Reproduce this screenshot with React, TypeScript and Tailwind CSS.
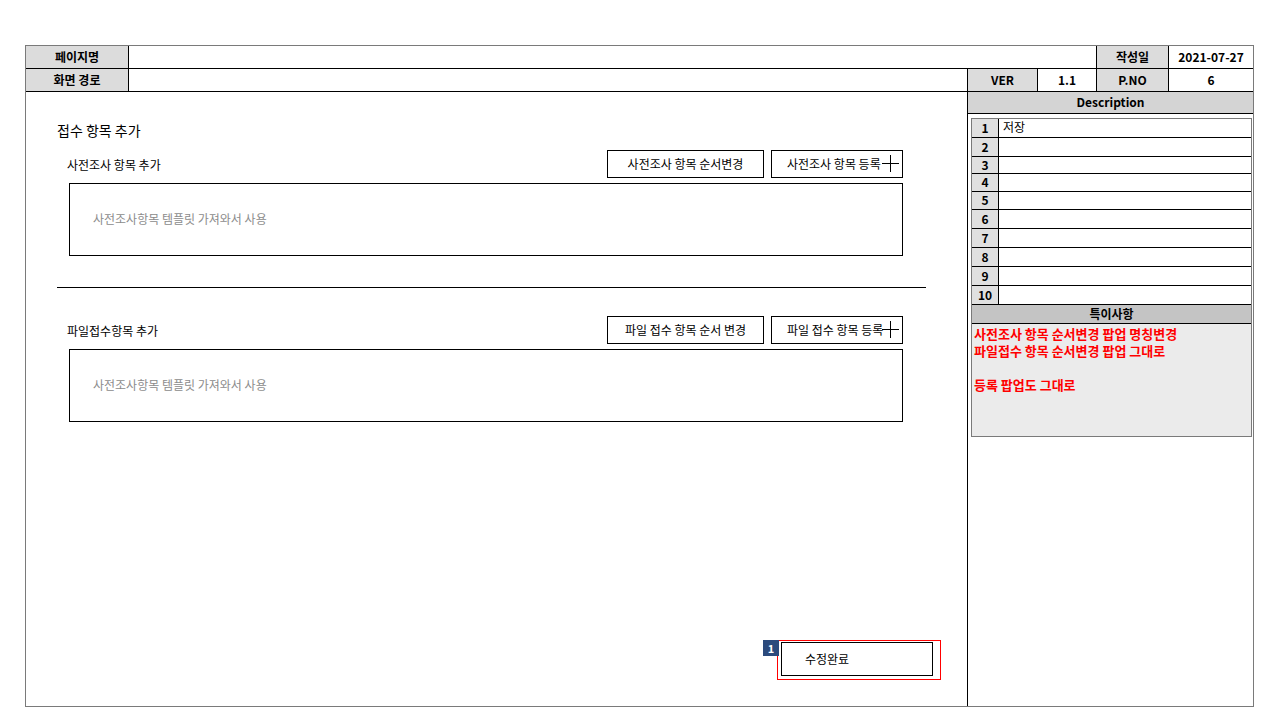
import React from "react";

const font = { fontFamily: '"Noto Sans CJK KR", "Noto Sans", sans-serif' };

function Btn({ w, children, plus }: { w: string; children: React.ReactNode; plus?: boolean }) {
  return (
    <div className={`${w} h-[28px] border border-black flex items-center ${plus ? "justify-start pl-[15px]" : "justify-center"} text-[12px] text-black bg-white relative whitespace-nowrap`}>
      <span className="pb-[1px]">{children}</span>
      {plus && (
        <svg width="19" height="19" viewBox="0 0 19 19" className="absolute right-[2px] top-[3px]">
          <path d="M9.5 1 V18 M1 9.5 H18" stroke="black" strokeWidth="1" />
        </svg>
      )}
    </div>
  );
}

function Section({ label, b1, b2 }: { label: string; b1: string; b2: string }) {
  return (
    <div className="ml-[43px] w-[834px]">
      <div className="h-[28px] flex items-center justify-between">
        <span className="ml-[-2px] text-[12px] text-black pt-[1px]">{label}</span>
        <div className="flex gap-[7px]">
          <Btn w="w-[157px]">{b1}</Btn>
          <Btn w="w-[132px]" plus>{b2}</Btn>
        </div>
      </div>
      <div className="mt-[5px] h-[73px] border border-black flex items-center pl-[23px] pb-[2px] text-[12px] text-[#8c8c8c]">
        사전조사항목 템플릿 가져와서 사용
      </div>
    </div>
  );
}

const rowHeights = [19, 19, 17, 18, 18, 19, 19, 19, 19, 19];

export default function App() {
  return (
    <div className="w-[1280px] h-[720px] bg-white pt-[45px] pl-[25px]" style={font}>
      <div className="w-[1229px] h-[662px] border border-[#7a7a7a] flex flex-col text-black">
        {/* header row 1 */}
        <div className="h-[23px] flex border-b border-black text-[12px] leading-[16px]">
          <div className="w-[103px] bg-[#dcdcdc] border-r border-black flex items-center justify-center font-bold pb-[1px]">페이지명</div>
          <div className="flex-1 border-r border-black" />
          <div className="w-[72px] bg-[#dcdcdc] border-r border-black flex items-center justify-center font-bold pb-[1px]">작성일</div>
          <div className="w-[84px] flex items-center justify-center font-bold pb-[1px]">2021-07-27</div>
        </div>
        {/* header row 2 */}
        <div className="h-[23px] flex border-b border-black text-[12px] leading-[16px]">
          <div className="w-[103px] bg-[#dcdcdc] border-r border-black flex items-center justify-center font-bold pb-[1px]">화면 경로</div>
          <div className="flex-1 border-r border-black" />
          <div className="w-[70px] bg-[#dcdcdc] border-r border-black flex items-center justify-center font-bold pb-[1px]">VER</div>
          <div className="w-[59px] border-r border-black flex items-center justify-center font-bold pb-[1px]">1.1</div>
          <div className="w-[72px] bg-[#dcdcdc] border-r border-black flex items-center justify-center font-bold pb-[1px]">P.NO</div>
          <div className="w-[84px] flex items-center justify-center font-bold pb-[1px]">6</div>
        </div>
        {/* body */}
        <div className="flex-1 flex">
          <div className="flex-1 border-r border-black flex flex-col">
            <div className="mt-[28px] ml-[31px] text-[14px] leading-[20px]">접수 항목 추가</div>
            <div className="mt-[10px]">
              <Section label="사전조사 항목 추가" b1="사전조사 항목 순서변경" b2="사전조사 항목 등록" />
            </div>
            <div className="mt-[31px] ml-[31px] w-[869px] h-px bg-black" />
            <div className="mt-[28px]">
              <Section label="파일접수항목 추가" b1="파일 접수 항목 순서 변경" b2="파일 접수 항목 등록" />
            </div>
            <div className="mt-auto mb-[26px] flex justify-end pr-[26px]">
              <div className="relative w-[164px] h-[40px] border border-[#ff0000] pl-[3px] pt-[1px]">
                <div className="absolute left-[-15px] top-[-1px] w-[16px] h-[16px] bg-[#2b4a7c] text-white text-[11px] font-bold flex items-center justify-center">1</div>
                <div className="w-[152px] h-[34px] border border-black flex items-center pl-[23px] pb-[1px] text-[12px]">수정완료</div>
              </div>
            </div>
          </div>
          {/* right panel */}
          <div className="w-[285px] flex flex-col">
            <div className="h-[22px] bg-[#d4d4d4] border-b border-black flex items-center justify-center text-[12px] leading-[16px] font-bold pb-[2px]">Description</div>
            <div className="mt-[4px] ml-[3px] mr-[1px] border border-[#7a7a7a] flex flex-col">
              {rowHeights.map((h, i) => (
                <div key={i} className="flex border-b border-black" style={{ height: h }}>
                  <div className="w-[27px] bg-[#e0e0e0] border-r border-black flex items-center justify-center text-[12px] leading-[16px] font-bold pb-[1px]">{i + 1}</div>
                  <div className="flex-1 bg-white pl-[4px] text-[12px] leading-[15px]">{i === 0 ? "저장" : ""}</div>
                </div>
              ))}
              <div className="h-[19px] bg-[#c4c4c4] border-b border-black flex items-center justify-center text-[12px] leading-[16px] font-bold pb-[1px]">특이사항</div>
              <div className="h-[112px] bg-[#ebebeb] pl-[2px] pt-[1px] text-[13px] leading-[17px] font-bold text-[#ff0000]">
                <div>사전조사 항목 순서변경 팝업 명칭변경</div>
                <div>파일접수 항목 순서변경 팝업 그대로</div>
                <div>&nbsp;</div>
                <div>등록 팝업도 그대로</div>
              </div>
            </div>
          </div>
        </div>
      </div>
    </div>
  );
}
